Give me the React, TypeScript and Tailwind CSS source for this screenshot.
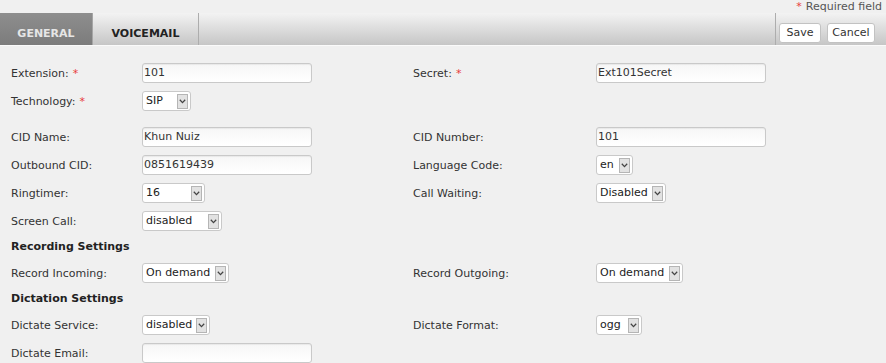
import React from "react"

const font = { fontFamily: '"DejaVu Sans", Verdana, sans-serif' }

function Req() {
  return <span className="text-[#e83a3a] ml-[4px]">*</span>
}

function TextBox({ value = "", width = "w-[170px]" }: { value?: string; width?: string }) {
  return (
    <div
      className={`${width} h-[20px] rounded-[3px] border border-[#c9c9c9] bg-gradient-to-b from-[#f6f6f6] to-white pl-[1px] flex items-center text-[11px] text-[#333] shadow-[inset_0_1px_1px_rgba(0,0,0,0.06)]`}
    >
      {value}
    </div>
  )
}

function Chevron() {
  return (
    <svg width="7" height="5" viewBox="0 0 7 5" className="block">
      <path d="M0.8 0.8 L3.5 3.6 L6.2 0.8" fill="none" stroke="#444" strokeWidth="1.3" />
    </svg>
  )
}

function Select({ value, width }: { value: string; width: string }) {
  return (
    <div
      className={`${width} h-[20px] rounded-[3px] border border-[#c9c9c9] bg-white flex items-center text-[11px] text-[#222]`}
    >
      <span className="pl-[3px] flex-1">{value}</span>
      <div className="mr-[2px] h-[15px] w-[11px] border border-[#b5b5b5] bg-[#e2e2e2] flex items-center justify-center">
        <Chevron />
      </div>
    </div>
  )
}

function Label({ children }: { children: React.ReactNode }) {
  return <div className="text-[11px] text-[#333] leading-[13px]">{children}</div>
}

function Row({
  left,
  leftField,
  right,
  rightField,
  className = "",
}: {
  left: React.ReactNode
  leftField: React.ReactNode
  right?: React.ReactNode
  rightField?: React.ReactNode
  className?: string
}) {
  return (
    <div className={`h-[28px] grid grid-cols-[131px_271px_183px_1fr] items-center ${className}`}>
      <Label>{left}</Label>
      <div>{leftField}</div>
      <Label>{right}</Label>
      <div>{rightField}</div>
    </div>
  )
}

function Section({ title }: { title: string }) {
  return (
    <div className="h-[24px] flex items-center text-[11px] font-bold text-[#222]">{title}</div>
  )
}

export default function App() {
  return (
    <div className="w-[886px] h-[363px] overflow-hidden bg-[#f0f0f0]" style={font}>
      {/* top strip */}
      <div className="h-[13px] flex justify-end items-center pr-[4px] text-[11px] text-[#555] leading-[13px]">
        <span className="text-[#e83a3a] mr-[4px]">*</span>Required field
      </div>

      {/* tab bar */}
      <div className="h-[33px] flex bg-gradient-to-b from-[#f3f3f3] to-[#c6c6c6] border-b border-[#fafafa]">
        <div className="w-[93px] bg-gradient-to-b from-[#8e8e8e] to-[#7c7c7c] border-r border-[#a5a5a5] flex justify-center pt-[13px] text-[11px] font-bold text-[#e6e6e6]">
          GENERAL
        </div>
        <div className="w-[106px] border-r border-[#adadad] flex justify-center pt-[13px] text-[11px] font-bold text-[#222]">
          VOICEMAIL
        </div>
        <div className="flex-1" />
        <div className="border-l border-[#adadad] flex items-end gap-[6px] pl-[3px] pr-[11px] pb-[2px]">
          <button className="h-[20px] w-[42px] rounded-[3px] border border-[#c2c2c2] bg-white text-[11px] text-[#333]">
            Save
          </button>
          <button className="h-[20px] w-[48px] rounded-[3px] border border-[#c2c2c2] bg-white text-[11px] text-[#333]">
            Cancel
          </button>
        </div>
      </div>

      {/* form */}
      <div className="pl-[11px] pt-[13px]">
        <Row
          left={<>Extension:<Req /></>}
          leftField={<TextBox value="101" />}
          right={<>Secret:<Req /></>}
          rightField={<TextBox value="Ext101Secret" />}
        />
        <Row left={<>Technology:<Req /></>} leftField={<Select value="SIP" width="w-[49px]" />} />
        <Row
          className="mt-[8px]"
          left="CID Name:"
          leftField={<TextBox value="Khun Nuiz" />}
          right="CID Number:"
          rightField={<TextBox value="101" />}
        />
        <Row
          left="Outbound CID:"
          leftField={<TextBox value="0851619439" />}
          right="Language Code:"
          rightField={<Select value="en" width="w-[37px]" />}
        />
        <Row
          left="Ringtimer:"
          leftField={<Select value="16" width="w-[63px]" />}
          right="Call Waiting:"
          rightField={<Select value="Disabled" width="w-[70px]" />}
        />
        <Row left="Screen Call:" leftField={<Select value="disabled" width="w-[80px]" />} />
        <Section title="Recording Settings" />
        <Row
          left="Record Incoming:"
          leftField={<Select value="On demand" width="w-[87px]" />}
          right="Record Outgoing:"
          rightField={<Select value="On demand" width="w-[87px]" />}
        />
        <Section title="Dictation Settings" />
        <Row
          left="Dictate Service:"
          leftField={<Select value="disabled" width="w-[68px]" />}
          right="Dictate Format:"
          rightField={<Select value="ogg" width="w-[46px]" />}
        />
        <Row left="Dictate Email:" leftField={<TextBox />} />
      </div>
    </div>
  )
}
